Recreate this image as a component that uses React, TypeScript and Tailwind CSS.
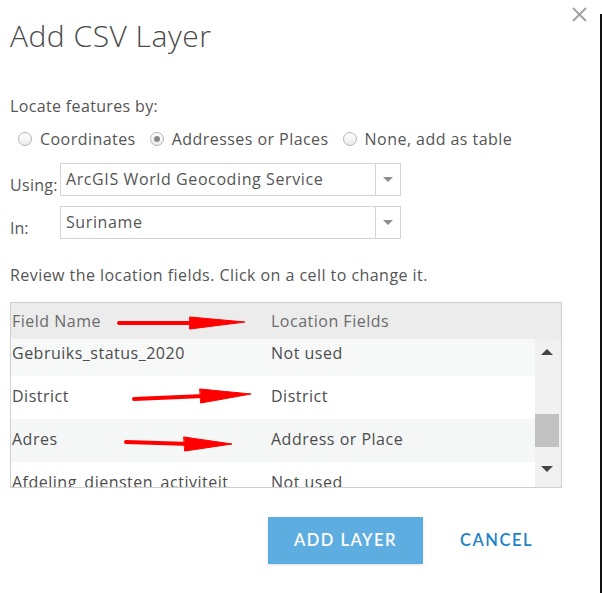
const rows = [
  { field: 'Gebruiks_status_2020', loc: 'Not used', bg: 'bg-[#f7f8f8]' },
  { field: 'District', loc: 'District', bg: 'bg-white' },
  { field: 'Adres', loc: 'Address or Place', bg: 'bg-[#f5f7f7]' },
  { field: 'Afdeling_diensten_activiteit', loc: 'Not used', bg: 'bg-white' },
];

function Radio({ checked, label }: { checked?: boolean; label: string }) {
  return (
    <label className="flex items-center gap-[8px]">
      <span className="w-[14px] h-[14px] rounded-full border border-[#b5b5b5] bg-gradient-to-b from-white to-[#ececec] flex items-center justify-center">
        {checked && <span className="w-[6px] h-[6px] rounded-full bg-[#8a8a8a]" />}
      </span>
      <span>{label}</span>
    </label>
  );
}

function Select({ value }: { value: string }) {
  return (
    <div className="w-[341px] h-[33px] border border-[#d4d4d4] flex items-stretch bg-white">
      <div className="flex-1 px-[5px] flex items-center leading-none pb-[2px] tracking-[0.6px]">{value}</div>
      <div className="w-[25px] border-l border-[#d4d4d4] flex items-center justify-center">
        <span className="w-0 h-0 border-l-[5px] border-r-[5px] border-t-[5px] border-l-transparent border-r-transparent border-t-[#8c8c8c]" />
      </div>
    </div>
  );
}

function Arrows() {
  return (
    <svg className="absolute inset-0 pointer-events-none" width="602" height="593">
      <g fill="#f00" stroke="#f00" strokeLinecap="round">
        <line x1="119" y1="323" x2="196" y2="323" strokeWidth="4" />
        <polygon points="190,317 245,322 190,329" />
        <line x1="134" y1="399" x2="204" y2="396" strokeWidth="4" />
        <polygon points="200,389 251,394 201,403" />
        <line x1="126" y1="442" x2="190" y2="444" strokeWidth="4" />
        <polygon points="184,437 232,444 185,451" />
      </g>
    </svg>
  );
}

export default function App() {
  return (
    <div className="relative w-[602px] h-[593px] bg-white flex font-['Open_Sans',sans-serif] text-[#4c4c4c] overflow-hidden">
      <div className="w-[600px] pl-[10px]">
        <div className="flex justify-between items-start">
          <h1 className="mt-[16px] text-[30px] leading-[40px] font-light tracking-[0.5px] text-[#4a4a4a]">Add CSV Layer</h1>
          <svg className="mt-[7px] mr-[13px]" width="15" height="15" viewBox="0 0 15 15">
            <path d="M1 1 L14 14 M14 1 L1 14" stroke="#a3a3a3" strokeWidth="2" />
          </svg>
        </div>

        <p className="mt-[40px] text-[16px] leading-[20px] tracking-[0.35px] text-[#555]">Locate features by:</p>
        <div className="mt-[12px] ml-[8px] flex gap-[14px] text-[16px] leading-[22px] tracking-[0.45px] text-[#555]">
          <Radio label="Coordinates" />
          <Radio checked label="Addresses or Places" />
          <Radio label="None, add as table" />
        </div>

        <div className="mt-[13px] flex items-start text-[16px] text-[#555]">
          <span className="w-[50px] mt-[10px] tracking-[0.3px]">Using:</span>
          <Select value="ArcGIS World Geocoding Service" />
        </div>
        <div className="mt-[9px] flex items-start text-[16px] text-[#555]">
          <span className="w-[50px] mt-[10px]">In:</span>
          <Select value="Suriname" />
        </div>

        <p className="mt-[25px] text-[16px] leading-[20px] tracking-[0.45px] text-[#555]">
          Review the location fields. Click on a cell to change it.
        </p>

        <div className="mt-[17px] w-[552px] h-[186px] border border-[#cfcfcf] flex flex-col text-[16px] tracking-[0.5px]">
          <div className="h-[36px] bg-[#ececec] flex items-center text-[#6b6b6b]">
            <span className="w-[260px] pl-[1px]">Field Name</span>
            <span>Location Fields</span>
          </div>
          <div className="flex-1 flex overflow-hidden bg-[#f0f0f0]">
            <div className="flex-1 overflow-hidden">
              <div className="-mt-[6px]">
                {rows.map((r) => (
                  <div key={r.field} className={`h-[43px] flex items-center pb-[4px] ${r.bg}`}>
                    <span className="w-[260px] pl-[1px] whitespace-nowrap">{r.field}</span>
                    <span>{r.loc}</span>
                  </div>
                ))}
              </div>
            </div>
            <div className="w-[24px] mr-[2px] bg-[#f1f1f1] flex flex-col items-center">
              <span className="mt-[10px] w-0 h-0 border-l-[6px] border-r-[6px] border-b-[6px] border-l-transparent border-r-transparent border-b-[#444]" />
              <div className="mt-[59px] w-[24px] h-[33px] bg-[#c1c1c1]" />
              <span className="mt-[19px] w-0 h-0 border-l-[6px] border-r-[6px] border-t-[6px] border-l-transparent border-r-transparent border-t-[#444]" />
            </div>
          </div>
        </div>

        <div className="mt-[29px] flex items-center font-['Lato',sans-serif]">
          <button className="ml-[258px] w-[155px] h-[47px] bg-[#5dade0] text-white text-[16.5px] font-semibold tracking-[1.5px] shadow-sm">
            ADD LAYER
          </button>
          <button className="ml-[37px] text-[#1d82c6] text-[16.5px] font-semibold tracking-[1.5px]">CANCEL</button>
        </div>
      </div>
      <div className="w-[2px] mt-[14px] bg-[#111]" />
      <Arrows />
    </div>
  );
}
